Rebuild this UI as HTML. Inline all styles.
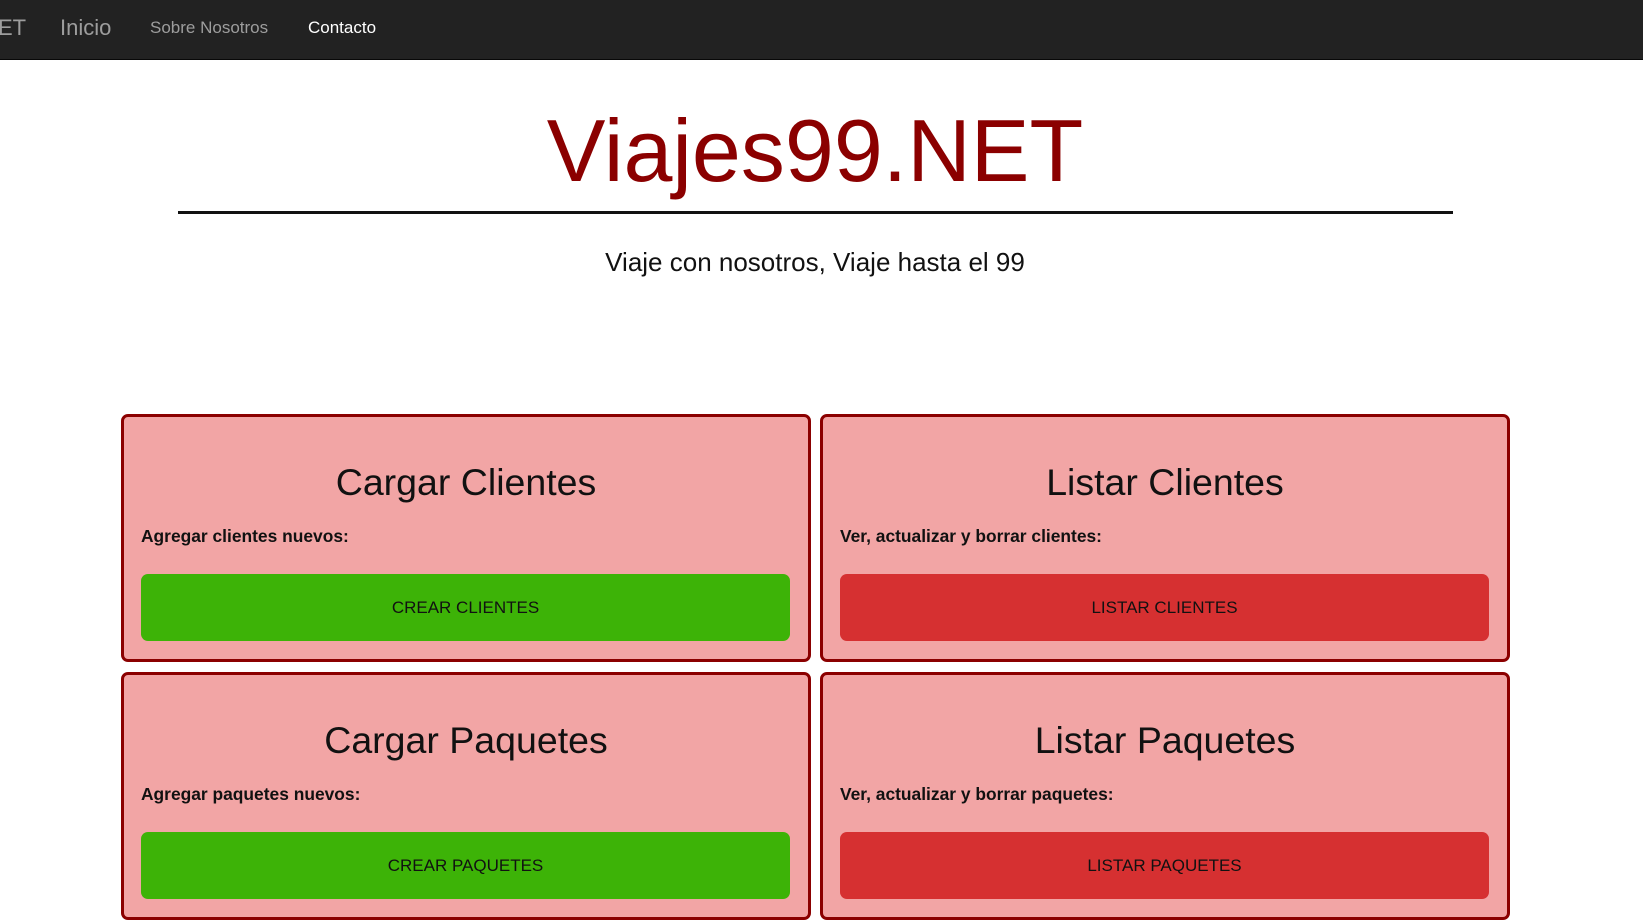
<!DOCTYPE html>
<html><head><meta charset="utf-8"><style>
*{margin:0;padding:0;box-sizing:border-box}
body{width:1643px;height:924px;overflow:hidden;background:#fff;font-family:"Liberation Sans",Arial,sans-serif;position:relative}
.nav{position:absolute;left:0;top:0;width:1643px;height:60px;background:#222;border-bottom:1px solid #080808}
.nav span{position:absolute;color:#9d9d9d}
h1{position:absolute;left:0;width:1630px;text-align:center;top:107px;font-size:88px;font-weight:normal;color:#8b0000;line-height:1}
.hr{position:absolute;left:178px;width:1275px;top:211px;height:3px;background:#111}
.sub{position:absolute;left:0;width:1630px;text-align:center;top:247px;font-size:26px;color:#111}
.card{position:absolute;width:690px;height:248px;background:#f2a5a5;border:3px solid #8b0000;border-radius:7px}
.card h2{position:absolute;left:0;right:0;text-align:center;top:44px;font-size:37.5px;font-weight:normal;color:#111}
.card p{position:absolute;left:17px;top:109px;font-size:17.4px;font-weight:bold;color:#111}
.card .b{position:absolute;left:17px;width:649px;top:157px;height:67px;border-radius:7px;text-align:center;line-height:67px;font-size:17px;color:#111}
.g{background:#3db307}.r{background:#d63031}
</style></head><body>
<div class="nav">
<span style="left:-2px;top:15px;font-size:22px">ET</span>
<span style="left:60px;top:15px;font-size:22px">Inicio</span>
<span style="left:150px;top:18px;font-size:17px">Sobre Nosotros</span>
<span style="left:308px;top:18px;font-size:17px;color:#fff">Contacto</span>
</div>
<h1>Viajes99.NET</h1>
<div class="hr"></div>
<div class="sub">Viaje con nosotros, Viaje hasta el 99</div>
<div class="card" style="left:121px;top:414px"><h2>Cargar Clientes</h2><p>Agregar clientes nuevos:</p><div class="b g">CREAR CLIENTES</div></div>
<div class="card" style="left:820px;top:414px"><h2>Listar Clientes</h2><p>Ver, actualizar y borrar clientes:</p><div class="b r">LISTAR CLIENTES</div></div>
<div class="card" style="left:121px;top:672px"><h2>Cargar Paquetes</h2><p>Agregar paquetes nuevos:</p><div class="b g">CREAR PAQUETES</div></div>
<div class="card" style="left:820px;top:672px"><h2>Listar Paquetes</h2><p>Ver, actualizar y borrar paquetes:</p><div class="b r">LISTAR PAQUETES</div></div>
</body></html>
